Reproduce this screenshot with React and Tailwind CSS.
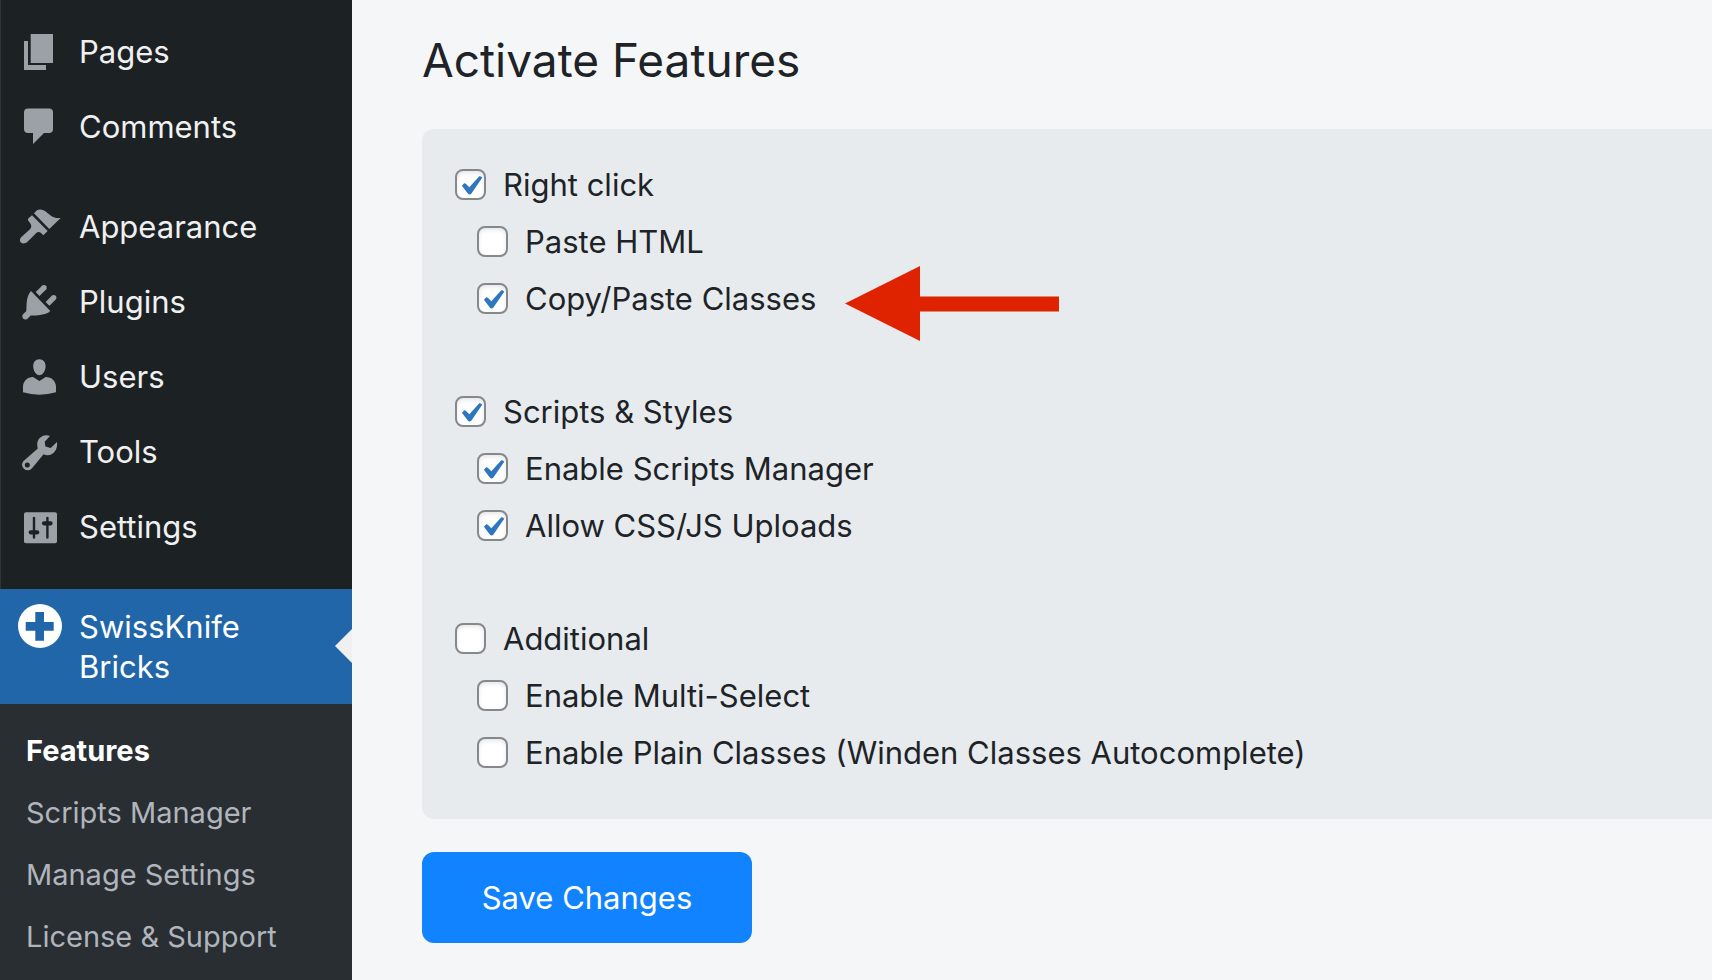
import { useState } from "react";

function Icon({ children }) {
  return (
    <svg viewBox="0 0 44 44" className="size-11 shrink-0" fill="currentColor" aria-hidden="true">
      {children}
    </svg>
  );
}

const icons = {
  pages: (
    <Icon>
      <path d="M6 11h4v24h18v5H6z" />
      <path d="M12.700 4h22.300v29H12.700z" />
    </Icon>
  ),
  comments: (
    <Icon>
      <path d="M10 3.500h21a4 4 0 0 1 4 4V24a4 4 0 0 1-4 4h-5L15 39V28h-5a4 4 0 0 1-4-4V7.500a4 4 0 0 1 4-4z" />
    </Icon>
  ),
  appearance: (
    <Icon>
      <path d="M16 8.300L19 5.300Q22 3.400 26 5.500C31 8.500 34 14 42.700 13L31.300 24z" />
      <path d="M14 10.300L29.700 26l-4.400 4.200-2-2Q20.500 25.800 18 28.300L9.500 36.800C7.500 38.800 4.500 38.900 2.900 37.600C1.300 36 1.700 33.200 3.700 31.700L12 24.300Q14.500 21.500 12.200 18.300L10 15.300Q9.500 14.300 10.500 13.300z" />
    </Icon>
  ),
  plugins: (
    <Icon>
      <path d="M13 11L32.300 31C28 35.500 19 35.300 12.700 35.600L10 38.300A3.200 3.200 0 1 1 5.800 33.600L8.200 31.300C9 26 7.500 17 13 11z" />
      <path d="M19.600 14l6.200-6.200M29.500 23.800l6-6" fill="none" stroke="currentColor" strokeWidth="5.400" />
      <circle cx="26" cy="7.700" r="2.700" />
      <circle cx="35.700" cy="17.600" r="2.700" />
    </Icon>
  ),
  users: (
    <Icon>
      <path d="M21.400 4.300c4 0 6.200 3 6.200 7 0 4.500-2.800 9-6.200 9s-6.200-4.500-6.200-9c0-4 2.200-7 6.200-7z" />
      <path d="M5 37.300V32C5 26 9.500 22 15 22l6.400 4 6.400-4C33.500 22 38 26 38 32v5.300Q30 39.700 21.400 39.700T5 37.300z" />
    </Icon>
  ),
  tools: (
    <Icon>
      <path
        fillRule="evenodd"
        d="M32 6L26.700 11.700L27.400 16.500L32.700 18L39 12C39.600 17 38 21.500 34 24Q29.800 26.300 25.600 24.300L14 38.300A5.500 5.500 0 1 1 5.300 31.200L19.800 18.600C18.800 14 19 10.500 22 7.800Q26.500 4 32 6zM9.300 32.500a2.500 2.500 0 1 0 0 5a2.500 2.500 0 1 0 0-5z"
      />
    </Icon>
  ),
  settings: (
    <Icon>
      <rect x="6" y="7.300" width="33" height="31" rx="2" />
      <g className="stroke-[#1c2124]" fill="none" strokeLinecap="round">
        <path d="M16 13v19.500M29.400 13v19.500" strokeWidth="2.400" />
        <path d="M12.700 27.300h6.600M26 18.300h6.600" strokeWidth="4.200" />
      </g>
    </Icon>
  ),
  swissKnife: (
    <Icon>
      <path fillRule="evenodd" d="M22 0a22 22 0 1 0 0 44a22 22 0 1 0 0-44zM17.300 8H26v10h9.700v8.700H26v10h-8.700v-10H7.700V18h9.600z" />
    </Icon>
  ),
};

const menuGroups = [
  [
    ["Pages", "pages"],
    ["Comments", "comments"],
  ],
  [
    ["Appearance", "appearance"],
    ["Plugins", "plugins"],
    ["Users", "users"],
    ["Tools", "tools"],
    ["Settings", "settings"],
  ],
];

const featureGroups = [
  [
    { id: "right-click", label: "Right click", on: true },
    { id: "paste-html", label: "Paste HTML", on: false },
    { id: "copy-paste-classes", label: "Copy/Paste Classes", on: true, arrow: true },
  ],
  [
    { id: "scripts-styles", label: "Scripts & Styles", on: true },
    { id: "scripts-manager", label: "Enable Scripts Manager", on: true },
    { id: "css-js-uploads", label: "Allow CSS/JS Uploads", on: true },
  ],
  [
    { id: "additional", label: "Additional", on: false },
    { id: "multi-select", label: "Enable Multi-Select", on: false },
    { id: "plain-classes", label: "Enable Plain Classes (Winden Classes Autocomplete)", on: false },
  ],
];

function Sidebar() {
  return (
    <nav className="w-[352px] shrink-0 bg-[#1c2124] pt-[14px] text-[31px] leading-10 text-[#f0f0f1] shadow-[inset_1px_0_0_#2f3438]">
      {menuGroups.map((group, i) => (
        <ul key={i} className="mb-[25px]">
          {group.map(([label, icon]) => (
            <li key={label}>
              <a href="#" className="flex h-[75px] items-center gap-[17px] pl-[18px]">
                <span className="text-[#9ca1a8]">{icons[icon]}</span>
                {label}
              </a>
            </li>
          ))}
        </ul>
      ))}
      <a
        href="#"
        className="relative flex items-start gap-[17px] bg-[#2066a9] pt-[15px] pr-16 pb-[17px] pl-[18px] text-white"
      >
        {icons.swissKnife}
        <span className="pt-[3px]">SwissKnife Bricks</span>
        <svg viewBox="0 0 17 34" className="absolute top-10 right-0 h-[34px] w-[17px]" aria-hidden="true">
          <path d="M17 0v34L0 17z" fill="#f0f0f1" />
        </svg>
      </a>
      <ul className="bg-[#292e32] py-4 pl-[26px] text-[29px] leading-[62px] text-[#b0b5bd]">
        <li>
          <a href="#" className="font-bold text-white">Features</a>
        </li>
        <li>
          <a href="#">Scripts Manager</a>
        </li>
        <li>
          <a href="#">Manage Settings</a>
        </li>
        <li>
          <a href="#">License &amp; Support</a>
        </li>
      </ul>
    </nav>
  );
}

function Feature({ feature, nested }) {
  const [on, setOn] = useState(feature.on);
  return (
    <li className={nested ? "flex h-[57px] items-center pl-[22px]" : "flex h-[57px] items-center"}>
      <div className="relative flex items-center gap-[17px]">
        <span className="grid size-[31px] shrink-0">
          <input
            id={feature.id}
            type="checkbox"
            checked={on}
            onChange={(e) => setOn(e.target.checked)}
            className="col-start-1 row-start-1 size-[31px] appearance-none rounded-lg border-2 border-[#85888d] bg-white shadow-[inset_0_2px_4px_rgba(0,0,0,0.1)]"
          />
          {on && (
            <svg
              viewBox="0 0 31 31"
              className="pointer-events-none col-start-1 row-start-1 size-[31px]"
              fill="#2e76bd"
              aria-hidden="true"
            >
              <path d="M24.300 7.300Q26.200 6.800 27.200 8.700L17.300 23.200Q15.200 27.200 12.600 24.200L6.900 16.700L9.200 14.200Q10 14 10.800 14.800L14.300 18.300z" />
            </svg>
          )}
        </span>
        <label htmlFor={feature.id} className="whitespace-nowrap">
          {feature.label}
        </label>
        {feature.arrow && (
          <svg
            viewBox="0 0 214 75"
            className="absolute -top-[13px] left-full ml-[29px] h-[75px] w-[214px]"
            fill="#df2300"
            aria-hidden="true"
          >
            <path d="M0 37.500L75 0v30.500h139v15H75V75z" />
          </svg>
        )}
      </div>
    </li>
  );
}

export default function App() {
  return (
    <div className="flex min-h-screen bg-[#f5f6f8] font-['Inter',sans-serif] text-[#1d2327]">
      <Sidebar />
      <main className="min-w-0 flex-1 pt-[30px] pl-[70px]">
        <h1 className="text-[46px] leading-[60px]">Activate Features</h1>
        <form className="mt-[39px]" onSubmit={(e) => e.preventDefault()}>
          <div className="flex flex-col gap-14 rounded-l-xl bg-[#e7ebee] pt-[27px] pb-[38px] pl-[33px] text-[31px] leading-10">
            {featureGroups.map((group) => (
              <ul key={group[0].id}>
                {group.map((feature, i) => (
                  <Feature key={feature.id} feature={feature} nested={i > 0} />
                ))}
              </ul>
            ))}
          </div>
          <button
            type="submit"
            className="mt-[33px] h-[91px] w-[330px] rounded-xl bg-[#1183ff] text-[31px] leading-10 text-white"
          >
            Save Changes
          </button>
        </form>
      </main>
    </div>
  );
}
